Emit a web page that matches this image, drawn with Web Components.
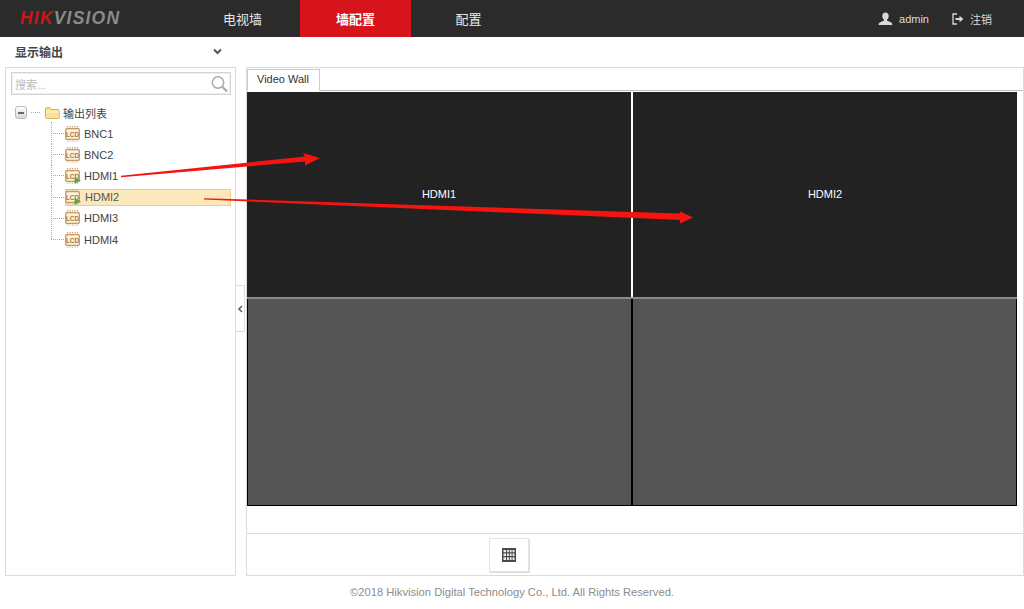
<!DOCTYPE html>
<html lang="zh"><head><meta charset="utf-8"><title>Video Wall</title>
<style>
html,body{margin:0;padding:0;background:#fff;overflow:hidden}
body{width:1024px;height:609px;position:relative;font-family:"Liberation Sans","Noto Sans CJK SC",sans-serif}
</style></head><body>
<hik-app></hik-app>
<script>
function def(name,css,html){
  customElements.define(name,class extends HTMLElement{
    connectedCallback(){
      if(this.shadowRoot)return;
      const s=this.attachShadow({mode:'open'});
      s.innerHTML='<style>'+css+'</style>'+(typeof html==='function'?html(this):html);
    }
  });
}
const FF='"Liberation Sans","Noto Sans CJK SC",sans-serif';
def('hik-header',`
:host{display:flex;height:37px;background:#2b2b2b;color:#eee;font:12px ${FF};align-items:stretch}
.logo{width:187px;display:flex;align-items:center;box-sizing:border-box;padding-left:20px;font:italic 700 17.5px "Liberation Sans",sans-serif;letter-spacing:1.2px}
.logo b{color:#c8161d}.logo span{color:#8a8a8a}
nav{display:flex;gap:2px}
nav a{width:111px;display:flex;align-items:center;justify-content:center;font-size:13px;color:#e8e8e8}
nav a.on{background:#d7141b;color:#fff;font-weight:700}
.r{margin-left:auto;display:flex;align-items:center;padding-right:32px;font-size:11px;color:#ddd}
.r svg{display:block}
.u{display:flex;align-items:center;gap:6px;margin-right:23px}
.l{display:flex;align-items:center;gap:6px}
`,`<div class="logo"><b>HIK</b><span>VISION</span></div>
<nav><a>电视墙</a><a class="on">墙配置</a><a>配置</a></nav>
<div class="r"><div class="u"><svg width="15" height="14" viewBox="0 0 15 14"><path fill="#d8d8d8" d="M7.500 .5c2 0 3.200 1.500 3.200 3.400 0 1.600-.8 3-1.600 3.600v1.200c2 .7 4.600 1.500 5.200 3V13H.7v-1.300c.6-1.500 3.200-2.300 5.200-3V7.500c-.8-.6-1.600-2-1.600-3.600C4.300 2 5.500 .5 7.500 .5z"/></svg><span>admin</span></div>
<div class="l"><svg width="12" height="12" viewBox="0 0 12 12"><path fill="none" stroke="#d8d8d8" stroke-width="1.300" d="M5 1H1v10h4"/><path fill="#d8d8d8" d="M3.500 5h4V2.800L11.500 6l-4 3.200V7h-4z"/></svg><span>注销</span></div></div>`);

def('hik-section-title',`
:host{display:flex;align-items:center;justify-content:space-between;height:30px;box-sizing:border-box;padding:0 15px 2px 15px;font:700 12px ${FF};color:#444;width:237px}
svg{display:block}
`,`<slot></slot><svg width="9" height="7" viewBox="0 0 9 7"><path d="M1 1.500l3.500 3.500L8 1.500" fill="none" stroke="#555" stroke-width="2"/></svg>`);

def('hik-search',`
:host{display:flex;align-items:center;justify-content:space-between;height:23px;box-sizing:border-box;border:1px solid #d4d4d4;box-shadow:inset 0 0 0 1px #eee;margin:4px 4px 0 5px;padding:0 2px 0 3px;font:11px ${FF};color:#bbb;background:#fff}
svg{display:block}
`,`<span>搜索...</span><svg width="17" height="18" viewBox="0 0 17 18"><circle cx="7" cy="7.500" r="5.700" fill="none" stroke="#a9a9a9" stroke-width="1.500"/><path d="M11.300 11.800l4.700 4.700" stroke="#a9a9a9" stroke-width="2.200"/></svg>`);

const lcd=`<svg width="15" height="16" viewBox="0 0 15 16" style="display:block">
<path d="M2.500 0v2.500M5 0v2.500M7.500 0v2.500M10 0v2.500M12.500 0v2.500M2.500 13v2.500M5 13v2.500M7.500 13v2.500M10 13v2.500M12.500 13v2.500" stroke="#cda670" stroke-width="1.300" stroke-dasharray="1 .5"/>
<rect x=".7" y="2.700" width="13.600" height="10.600" rx="1" fill="#fbf1dd" stroke="#c4986a" stroke-width="1.300"/>
<text x="7.500" y="10.500" font-size="6.400" font-weight="700" font-family="Liberation Sans" text-anchor="middle" fill="#a87a42">LCD</text>
</svg>`;
const play=`<svg width="7" height="7" viewBox="0 0 7 7" style="position:absolute;left:9px;top:9px;display:block"><path d="M.5 1C.5.3 1 .1 1.500.4l4.800 2.500c.4.300.4.900 0 1.200L1.500 6.600C1 6.900.5 6.700.5 6z" fill="#62a844"/></svg>`;

def('hik-tree-node',`
:host{display:flex;align-items:center;height:21.2px;position:relative;font:11px ${FF};color:#444}
.dash{position:absolute;left:0;top:10px;width:13px;border-top:1px dotted #aaa}
.v{position:absolute;left:0;top:-1px;border-left:1px dotted #aaa;height:11px}
:host(:not([last])) .v{height:22px}
.row{margin-left:14px;display:flex;align-items:center;height:17px;width:166px;box-sizing:border-box;border:1px solid transparent;position:relative}
:host([sel]) .row{background:#fde8bc;border-color:#f6c987;color:#555}
.ic{position:relative;width:15px;height:16px;flex:none;margin-left:-1px}
.t{margin-left:4px}
:host([sel]) .t{margin-left:5px}
`,(h)=>`<i class="v"></i><i class="dash"></i><div class="row"><span class="ic">${lcd}${h.hasAttribute('on')?play:''}</span><span class="t"><slot></slot></span></div>`);

def('hik-tree',`
:host{display:block;margin:7px 0 0 9px;font:11px ${FF};color:#444}
.root{display:flex;align-items:center;height:21px}
.m{width:10px;height:11px;border:1px solid #bbb;border-radius:3px;background:linear-gradient(#fff,#d8d8d8);display:flex;align-items:center;justify-content:center;margin-right:4px}
.m i{width:6px;height:2px;background:#666}
.d{width:9px;border-top:1px dotted #aaa;margin-right:5px}
.f{margin-right:3px;display:block}
.kids{padding-left:36px}
`,`<div class="root"><span class="m"><i></i></span><span class="d"></span>
<svg class="f" width="15" height="12" viewBox="0 0 15 12"><path d="M.5 10.500V2c0-.8.500-1.300 1.200-1.300h3.300L6.500 2.500h6.500c.7 0 1.200.4 1.200 1.200v7c0 .5-.4.8-.9.800H1.300c-.5 0-.8-.4-.8-1z" fill="#fbe29a" stroke="#d4b25e"/><path d="M1 5h13" stroke="#fff6d0"/></svg>
<span>输出列表</span></div><div class="kids"><slot></slot></div>`);

def('hik-left',`
:host{display:block;width:232px;height:509px;box-sizing:border-box;border:1px solid #dcdcdc;margin-left:5px;background:#fff}
`,`<slot></slot>`);

def('hik-splitter',`
:host{display:flex;flex:none;width:10px;height:47px;box-sizing:border-box;border:1px solid #dcdcdc;background:#fff;align-items:center;justify-content:center;align-self:flex-start;margin:218px 1px 0 -1px}
svg{display:block}
`,`<svg width="5" height="8" viewBox="0 0 5 8"><path d="M4 1L1 4l3 3" fill="none" stroke="#666" stroke-width="1.600"/></svg>`);

def('hik-tab',`
:host{display:flex;align-items:center;justify-content:center;width:73px;height:22px;box-sizing:border-box;border:1px solid #cfcfcf;border-bottom:0;padding:0 1px 3px 0;font:11px ${FF};color:#333;background:#fff}
`,`<slot></slot>`);

def('hik-cell',`
:host{display:flex;align-items:center;justify-content:center;padding-bottom:2px;font:11px ${FF};color:#fff;background:#222;min-width:0;min-height:0;box-sizing:border-box}
:host([idle]){background:#555}
`,`<slot></slot>`);

def('hik-wall',`
:host{display:grid;grid-template-columns:384px 1fr;grid-template-rows:205px 1fr;width:770px;height:414px;background:#fff;box-sizing:border-box;row-gap:2px;column-gap:2px;position:relative}
.l{position:absolute;left:0;right:0;top:205px;height:2px;background:#8a8a8a}
.b{position:absolute;left:384px;width:2px;top:207px;bottom:0;background:#000}
.o{position:absolute;left:0;right:0;top:207px;bottom:0;border:1px solid #000;border-top:0;pointer-events:none}
`,`<slot></slot><i class="l"></i><i class="b"></i><i class="o"></i>`);

def('hik-toolbar',`
:host{display:flex;height:42px;box-sizing:border-box;border-top:1px solid #dcdcdc;align-items:flex-start;padding:4px 0 0 242px}
.btn{width:40px;height:34px;box-sizing:border-box;border:1px solid #e4e4e4;box-shadow:1px 1px 0 #ddd;display:flex;align-items:center;justify-content:center;background:#fff}
svg{display:block}
`,`<div class="btn"><svg width="14" height="14" viewBox="0 0 14 14"><rect width="14" height="14" fill="#4a4a4a"/><path d="M1.500 2h2.500v2.300H1.500zM5 2h1.800v2.300H5zM7.800 2h1.800v2.300H7.800zM10.500 2h2v2.300h-2zM1.500 5.500h2.500v2.500H1.500zM5 5.500h1.800v2.500H5zM7.800 5.500h1.800v2.500H7.800zM10.500 5.500h2v2.500h-2zM1.500 9.300h2.500v2.700H1.500zM5 9.300h1.800v2.700H5zM7.800 9.300h1.800v2.700H7.800zM10.500 9.300h2v2.700h-2z" fill="#eee"/></svg></div>`);

def('hik-right',`
:host{display:block;flex:none;width:778px;height:509px;box-sizing:border-box;border:1px solid #dcdcdc;background:#fff}
.tabs{display:flex;height:23px;padding:1px 0 0 0;box-sizing:border-box;border-bottom:1px solid #bdbdbd}
.body{height:442px;box-sizing:border-box;padding:1px 0 0 0}
`,`<div class="tabs"><slot name="tab"></slot></div><div class="body"><slot name="wall"></slot></div><slot name="tools"></slot>`);

def('hik-footer',`
:host{display:flex;align-items:center;justify-content:center;height:31px;font:11.2px ${FF};color:#8d8d8d}
`,`<slot></slot>`);

def('hik-arrows',`
:host{position:absolute;left:0;top:0;width:1024px;height:609px;pointer-events:none;display:block}
svg{display:block}
`,`<svg width="1024" height="609" viewBox="0 0 1024 609">
<path fill="#f5140f" d="M121 175.800L305 156.500 303 153 320 158 305 165.500 305 161.500 121 177.200z"/>
<path fill="#f5140f" d="M204 198.200L680 213.500 680 211.500 693 217.500 680 223.500 680 220 204 199.500z"/>
</svg>`);

def('hik-app',`
:host{display:block;width:1024px;height:609px;position:relative}
.main{display:flex;align-items:stretch;height:509px}
`,`<hik-header></hik-header>
<hik-section-title>显示输出</hik-section-title>
<div class="main">
<hik-left><hik-search></hik-search><hik-tree>
<hik-tree-node>BNC1</hik-tree-node><hik-tree-node>BNC2</hik-tree-node>
<hik-tree-node on>HDMI1</hik-tree-node><hik-tree-node on sel>HDMI2</hik-tree-node>
<hik-tree-node>HDMI3</hik-tree-node><hik-tree-node last>HDMI4</hik-tree-node>
</hik-tree></hik-left>
<hik-splitter></hik-splitter>
<hik-right>
<hik-tab slot="tab">Video Wall</hik-tab>
<hik-wall slot="wall"><hik-cell>HDMI1</hik-cell><hik-cell>HDMI2</hik-cell><hik-cell idle></hik-cell><hik-cell idle></hik-cell></hik-wall>
<hik-toolbar slot="tools"></hik-toolbar>
</hik-right>
</div>
<hik-footer>©2018 Hikvision Digital Technology Co., Ltd. All Rights Reserved.</hik-footer>
<hik-arrows></hik-arrows>`);
</script>
</body></html>
